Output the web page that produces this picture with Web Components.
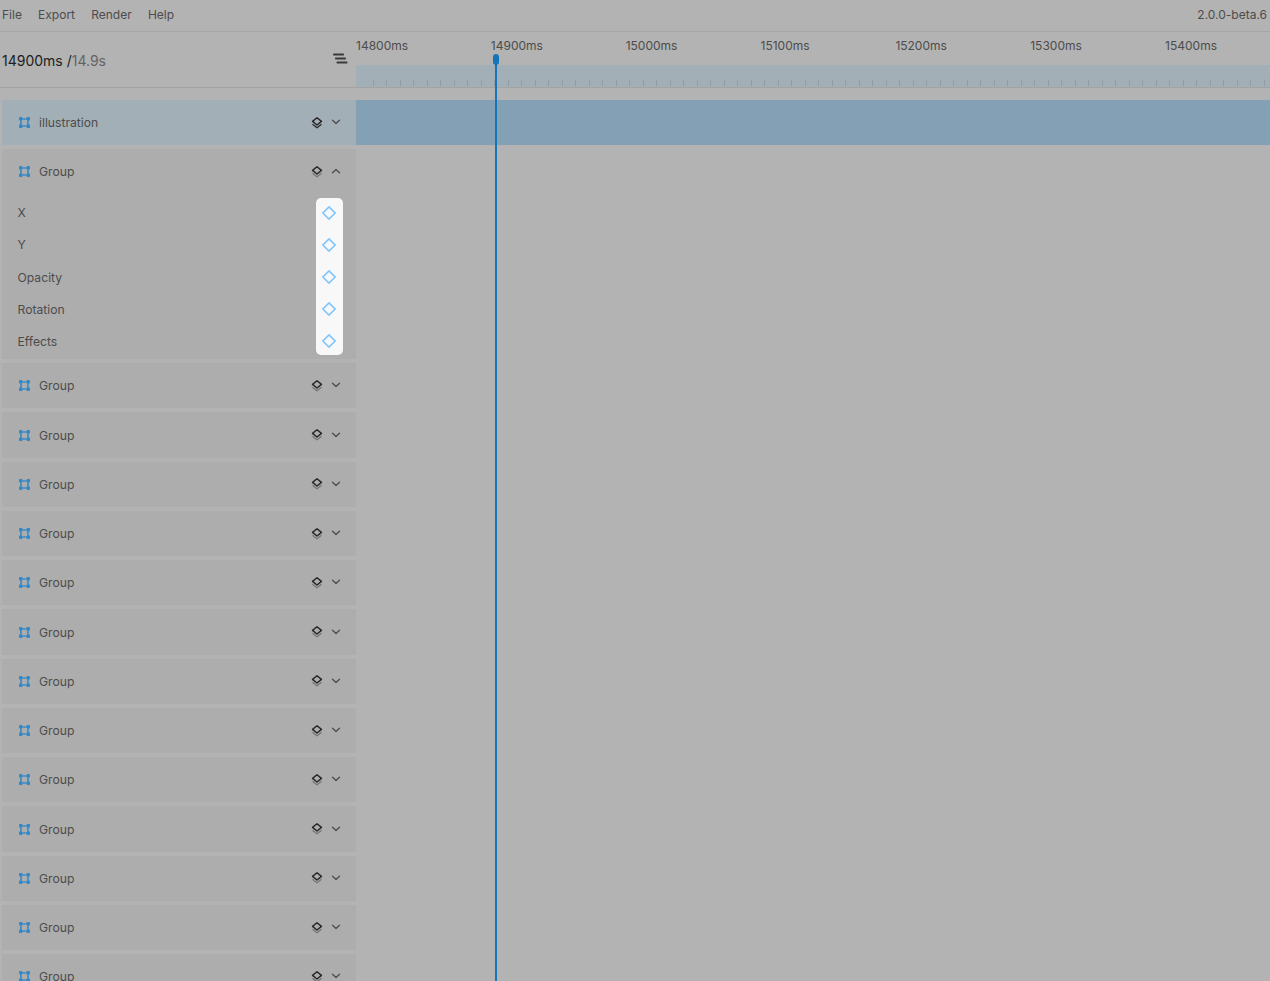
<!DOCTYPE html>
<html>
<head>
<meta charset="utf-8">
<title>Timeline</title>
<style>
  html, body { margin: 0; height: 100%; overflow: hidden; background: #b3b3b3; }
  body { font-family: Inter, "Liberation Sans", sans-serif; font-size: 12.16px; color: #4c4c4c; }
</style>
</head>
<body>
<timeline-app></timeline-app>
<script>
// small icons
const ICONS = {
  group: `<svg width="11" height="11" viewBox="0 0 11 11"><path d="M2 2H9V9H2Z" fill="none" stroke="#3f8cc6" stroke-width="1.7"/><g fill="#3388c7"><rect x="0" y="0" width="3.4" height="3.4" rx=".8"/><rect x="7.6" y="0" width="3.4" height="3.4" rx=".8"/><rect x="0" y="7.6" width="3.4" height="3.4" rx=".8"/><rect x="7.6" y="7.6" width="3.4" height="3.4" rx=".8"/></g></svg>`,
  layers: `<svg width="12" height="14" viewBox="0 0 12 14" fill="none" stroke-linejoin="round"><path d="M1.5 8.2L6 11.8L10.5 8.2" stroke="var(--under,#777)" stroke-width="1.4"/><path d="M6 1.8L10.5 5.4L6 9L1.5 5.4Z" stroke="#262626" stroke-width="1.4"/></svg>`,
  down: `<svg width="10" height="6" viewBox="0 0 10 6" fill="none"><path d="M1.5 1.2L5 4.4L8.5 1.2" stroke="#505050" stroke-width="1.4" stroke-linecap="round" stroke-linejoin="round"/></svg>`,
  up: `<svg width="10" height="6" viewBox="0 0 10 6" fill="none"><path d="M1.5 4.8L5 1.6L8.5 4.8" stroke="#505050" stroke-width="1.4" stroke-linecap="round" stroke-linejoin="round"/></svg>`,
  key: `<svg width="14" height="14" viewBox="0 0 14 14" fill="none"><path d="M7 .9L13.1 7L7 13.1L.9 7Z" stroke="#7cc4fa" stroke-width="1.5"/></svg>`,
  lines: `<svg width="15" height="12" viewBox="0 0 15 12" fill="#3a3a3a"><rect x="0" y="0.5" width="11" height="2" rx=".8"/><rect x="2" y="4.5" width="11" height="2" rx=".8"/><rect x="3.5" y="8.5" width="11" height="2" rx=".8"/></svg>`
};

class MenuBar extends HTMLElement {
  constructor(){
    super();
    this.attachShadow({mode: 'open'});
    this.shadowRoot.innerHTML = `
    <style>
      :host { display: flex; align-items: center; height: 31px; border-bottom: 1px solid #a6a6a6; padding: 0 3px 0 2px; font-size: 12px; }
      nav { display: flex; gap: 16.2px; flex: 1; margin-top: -2px; }
      span { margin-top: -2px; }
    </style>
    <nav><a>File</a><a>Export</a><a>Render</a><a>Help</a></nav>
    <span>2.0.0-beta.6</span>
    `;
  }
}
customElements.define('menu-bar', MenuBar);

class TimeRuler extends HTMLElement {
  constructor(){
    super();
    this.attachShadow({mode: 'open'});
    const labels = [14800,14900,15000,15100,15200,15300,15400]
      .map(t => `<span>${t}ms</span>`).join('');
    this.shadowRoot.innerHTML = `
    <style>
      :host { display: flex; flex-direction: column; flex: 1; min-width: 0; }
      .labels { display: flex; height: 33px; align-items: center; padding-bottom: 6px; box-sizing: border-box; font-size: 12px; }
      .labels span { flex: 0 0 134.85px; }
      .band { height: 22px; background-color: #a3afb6; background-repeat: no-repeat; background-size: 1px 6px; }
    </style>
    <div class="labels">${labels}</div>
    <div class="band" id="band"></div>
    `;
    // ticks every 13.5px
    const band = this.shadowRoot.getElementById('band');
    const pos = [];
    for (let x = 16.5; x < 920; x += 13.5) pos.push(`${x}px 15px`);
    band.style.backgroundImage = pos.map(() => 'linear-gradient(#929da2, #929da2)').join(',');
    band.style.backgroundPosition = pos.join(',');
  }
}
customElements.define('time-ruler', TimeRuler);

class TimeHeader extends HTMLElement {
  constructor(){
    super();
    this.attachShadow({mode: 'open'});
    this.shadowRoot.innerHTML = `
    <style>
      :host { display: flex; height: 55px; border-bottom: 1px solid #a3a3a3; }
      .left { flex: 0 0 356px; box-sizing: border-box; display: flex; align-items: center; padding: 1px 8px 0 2px; font-size: 14px; color: #202020; }
      .left b { font-weight: 400; flex: 1; }
      .left i { font-style: normal; color: #636363; }
      svg { display: block; margin-top: -2px; }
    </style>
    <div class="left"><b>14900ms /<i>14.9s</i></b>${ICONS.lines}</div>
    <time-ruler></time-ruler>
    `;
  }
}
customElements.define('time-header', TimeHeader);

class KeyPopup extends HTMLElement {
  constructor(){
    super();
    this.attachShadow({mode: 'open'});
    this.shadowRoot.innerHTML = `
    <style>
      :host { display: flex; flex-direction: column; position: absolute; left: 314px; top: 3.5px; width: 27px; height: 157px; background: #f8f8f8; border-radius: 5px; }
      div { height: 32.1px; flex: none; display: flex; align-items: center; justify-content: center; }
      div:first-of-type { margin-top: -1px; }
      svg { display: block; margin-left: -0.5px; }
    </style>
    ${[0,1,2,3,4].map(() => `<div>${ICONS.key}</div>`).join('')}
    `;
  }
}
customElements.define('key-popup', KeyPopup);

class TrackRow extends HTMLElement {
  constructor(){
    super();
    this.attachShadow({mode: 'open'});
  }
  connectedCallback(){
    const open = this.hasAttribute('open');
    const props = open ? `
      <div class="props">
        <p>X</p><p>Y</p><p>Opacity</p><p>Rotation</p><p>Effects</p>
        <key-popup></key-popup>
      </div>` : '';
    this.shadowRoot.innerHTML = `
    <style>
      :host { display: block; background: #adadad; flex: none; margin-left: 2px; width: 354px; }
      :host([selected]) { background: #a3afb6; --under: #2e2e2e; }
      .head { display: flex; align-items: center; height: 45.25px; padding: 0 15px 0 17px; box-sizing: border-box; }
      .name { flex: 1; margin-left: 9px; }
      .head svg { display: block; }
      .layers { margin-right: 8px; }
      .chev { margin-top: -1px; }
      .props { position: relative; height: 164.7px; box-sizing: border-box; padding-top: 2.7px; }
      p { margin: 0; height: 32.2px; line-height: 32px; padding-left: 15.5px; }
    </style>
    <div class="head">
      ${ICONS.group}
      <span class="name">${this.getAttribute('name')}</span>
      <span class="layers">${ICONS.layers}</span>
      <span class="chev">${open ? ICONS.up : ICONS.down}</span>
    </div>
    ${props}
    `;
  }
}
customElements.define('track-row', TrackRow);

class TimelineApp extends HTMLElement {
  constructor(){
    super();
    this.attachShadow({mode: 'open'});
    let rows = '';
    for (let i = 0; i < 13; i++) rows += `<track-row name="Group"></track-row>`;
    this.shadowRoot.innerHTML = `
    <style>
      :host { display: block; position: relative; height: 981px; overflow: hidden; }
      .body { display: flex; padding-top: 12px; }
      .tracks { flex: 0 0 356px; display: flex; flex-direction: column; gap: 4px; }
      .canvas { flex: 1; }
      .bar { height: 45.25px; background: #84a0b5; }
      .head { position: absolute; left: 493px; top: 54px; width: 6px; height: 11px; border-radius: 3px; background: #1675b9; }
      .line { position: absolute; left: 494.5px; top: 60px; bottom: 0; width: 2px; background: #1675b9; }
    </style>
    <menu-bar></menu-bar>
    <time-header></time-header>
    <div class="body">
      <div class="tracks">
        <track-row name="illustration" selected></track-row>
        <track-row name="Group" open></track-row>
        ${rows}
      </div>
      <div class="canvas"><div class="bar"></div></div>
    </div>
    <div class="line"></div>
    <div class="head"></div>
    `;
  }
}
customElements.define('timeline-app', TimelineApp);
</script>
</body>
</html>
